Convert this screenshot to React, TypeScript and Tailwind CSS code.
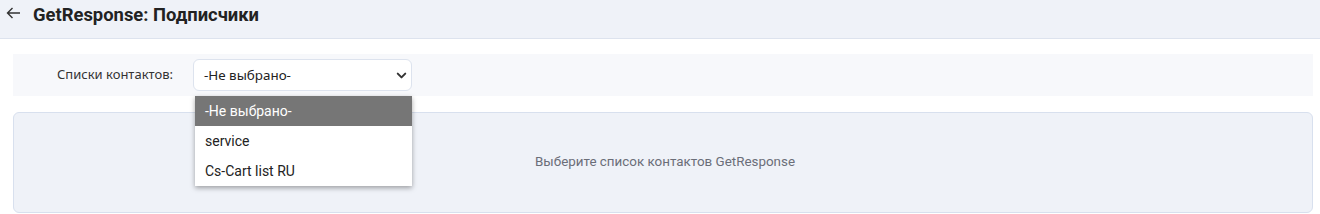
import { ChevronDown } from 'lucide-react'

const options = ['-Не выбрано-', 'service', 'Cs-Cart list RU']

export default function App() {
  return (
    <div className="min-h-screen bg-white font-['Roboto',sans-serif] text-[#222]">
      {/* шапка */}
      <div className="flex h-[39px] items-start gap-[12px] border-b border-[#dde3ee] bg-[#eff2f8] pl-[6px] pt-[3px]">
        <svg width="15" height="14" viewBox="0 0 15 14" className="mt-[3px] text-[#333]">
          <path d="M14 7H1.5M6.5 2L1.5 7l5 5" fill="none" stroke="currentColor" strokeWidth="1.4" />
        </svg>
        <h1 className="text-[18.4px] font-bold leading-[24px] text-[#222]">GetResponse: Подписчики</h1>
      </div>

      <div className="pl-[13px] pr-[7px] pt-[15px]">
        {/* фильтр */}
        <div className="flex h-[42px] items-center bg-[#f7f8fb]">
          <label className="w-[160px] text-right font-['Noto_Sans',sans-serif] text-[13px] text-[#333]">
            Списки контактов:
          </label>
          <div className="relative ml-[20px]">
            <div className="flex h-[32px] w-[219px] items-center justify-between rounded-[6px] border border-[#dde3ee] bg-white pl-[10px] pr-[2px] font-['Noto_Sans',sans-serif] text-[13.4px] text-[#222]">
              <span>-Не выбрано-</span>
              <ChevronDown size={15} strokeWidth={3.2} className="text-[#333]" />
            </div>
            <ul className="absolute left-[2px] top-[37px] z-10 w-[217px] bg-white text-[14px] text-[#222] shadow-[0_2px_5px_rgba(0,0,0,0.35)]">
              {options.map((o, i) => (
                <li
                  key={o}
                  className={
                    'flex h-[30px] items-center pl-[10px] ' + (i === 0 ? 'bg-[#767676] text-white' : '')
                  }
                >
                  {o}
                </li>
              ))}
            </ul>
          </div>
        </div>

        {/* пустое состояние */}
        <div className="mt-[16px] flex h-[101px] items-center justify-center rounded-[6px] border border-[#d8e0ee] bg-[#eff2f8] pl-[4px] text-[13.4px] text-[#6b6e78]">
          Выберите список контактов GetResponse
        </div>
      </div>
    </div>
  )
}
